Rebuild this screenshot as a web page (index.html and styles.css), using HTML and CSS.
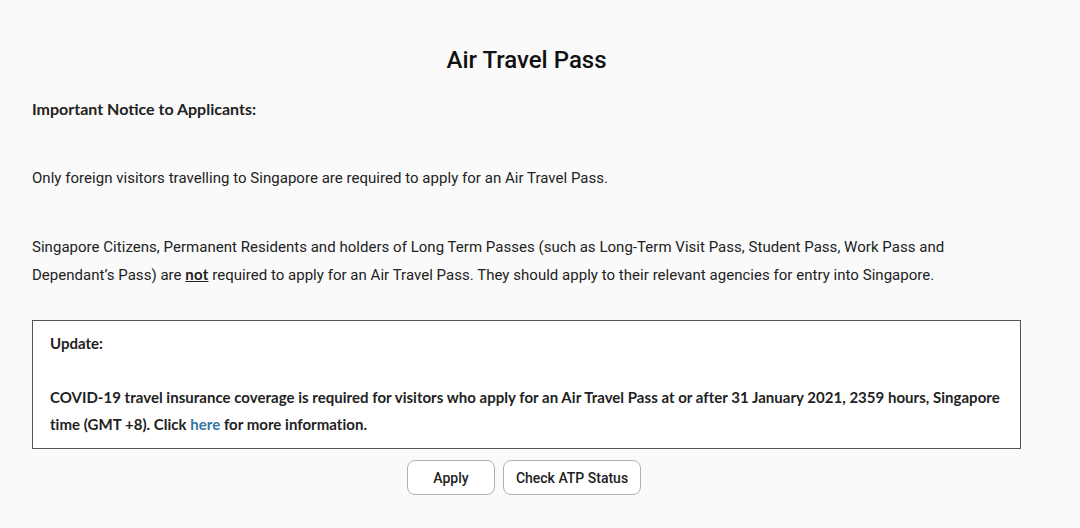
FILE: index.html
```html
<!DOCTYPE html>
<html>
<head>
<meta charset="utf-8">
<link rel="stylesheet" href="styles.css">
</head>
<body>
<div class="page">
  <h1 class="title">Air Travel Pass</h1>
  <p class="notice-head">Important Notice to Applicants:</p>
  <p class="para para-first">Only foreign visitors travelling to Singapore are required to apply for an Air Travel Pass.</p>
  <p class="para">Singapore Citizens, Permanent Residents and holders of Long Term Passes (such as Long-Term Visit Pass, Student Pass, Work Pass and Dependant’s Pass) are <u class="not">not</u> required to apply for an Air Travel Pass. They should apply to their relevant agencies for entry into Singapore.</p>
  <div class="update">
    <p class="update-head">Update:</p>
    <p class="update-text">COVID-19 travel insurance coverage is required for visitors who apply for an Air Travel Pass at or after 31 January 2021, 2359 hours, Singapore time (GMT +8). Click <a class="link" href="#">here</a> for more information.</p>
  </div>
  <div class="actions">
    <button class="btn btn-apply">Apply</button>
    <button class="btn btn-status">Check ATP Status</button>
  </div>
</div>
</body>
</html>
```
FILE: styles.css
```css
html, body {
  margin: 0;
  padding: 0;
  background: #fafafa;
}
.page {
  width: 989px;
  margin-left: 32px;
  padding-top: 44px;
  font-family: Roboto, "Liberation Sans", sans-serif;
  color: #222;
}
.title {
  margin: 0;
  text-align: center;
  font-size: 24px;
  font-weight: 500;
  line-height: 32px;
  color: #111;
}
.notice-head {
  margin: 19px 0 0;
  font-family: Lato, "Liberation Sans", sans-serif;
  font-weight: 700;
  font-size: 16px;
  line-height: 27px;
  color: #222;
}
.para {
  margin: 42px 0 0;
  font-size: 15px;
  line-height: 27px;
  letter-spacing: 0.03px;
}
.para-first {
  margin-top: 43px;
}
.not {
  font-family: Lato, "Liberation Sans", sans-serif;
  font-weight: 700;
  letter-spacing: 0.2px;
}
.update {
  margin-top: 31px;
  border: 1px solid #555;
  background: #fff;
  padding: 9px 18px 10px 17px;
  font-family: Lato, "Liberation Sans", sans-serif;
  font-weight: 700;
  font-size: 15px;
  line-height: 27px;
  letter-spacing: 0.025px;
  color: #222;
}
.update-head {
  margin: 0;
}
.update-text {
  margin: 27px 0 0;
}
.link {
  color: #2f77a0;
  text-decoration: none;
}
.actions {
  display: flex;
  justify-content: center;
  gap: 8px;
  margin-top: 11px;
  padding-right: 5px;
}
.btn {
  height: 35px;
  padding: 0;
  white-space: nowrap;
  background: #fff;
  border: 1px solid #b0b0b0;
  border-radius: 8px;
  font-family: Roboto, "Liberation Sans", sans-serif;
  font-weight: 500;
  font-size: 14px;
  color: #222;
}
.btn-apply {
  width: 88px;
}
.btn-status {
  width: 138px;
}
```
